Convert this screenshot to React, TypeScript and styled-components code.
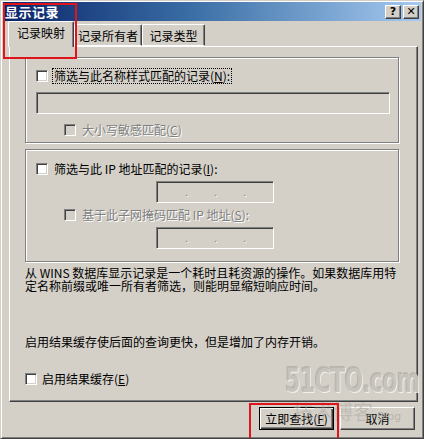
import React from "react";
import styled, { createGlobalStyle, css } from "styled-components";

const Global = createGlobalStyle`
  html, body { margin: 0; padding: 0; background: #d4d0c8; }
  body { font-family: "Noto Sans CJK SC", "DejaVu Sans", sans-serif; font-size: 12px; color: #000; }
  * { box-sizing: border-box; }
`;

const Window = styled.div`
  position: relative;
  width: 424px;
  height: 439px;
  background: #d4d0c8;
  border-top: 1px solid #d4d0c8;
  border-left: 1px solid #d4d0c8;
  border-right: 1px solid #404040;
  border-bottom: 1px solid #404040;
  box-shadow: inset 1px 1px #fff, inset -1px -1px #808080;
  padding: 1px 2px 0 2px;
  overflow: hidden;
`;

const TitleBar = styled.div`
  height: 19px;
  display: flex;
  align-items: center;
  justify-content: space-between;
  padding: 0 2px 0 2px;
  background: linear-gradient(to right, #0a246a 0%, #3a6ea5 45%, #a6caf0 100%);
`;

const Title = styled.div`
  color: #fff;
  font-weight: bold;
  font-size: 13px;
  line-height: 18px;
  letter-spacing: 0.5px;
`;

const TitleButtons = styled.div`
  display: flex;
  gap: 2px;
`;

const CapButton = styled.div`
  width: 16px;
  height: 14px;
  background: #d4d0c8;
  border-top: 1px solid #fff;
  border-left: 1px solid #fff;
  border-right: 1px solid #404040;
  border-bottom: 1px solid #404040;
  box-shadow: inset -1px -1px #808080;
  display: flex;
  align-items: center;
  justify-content: center;
  font-family: "DejaVu Sans", sans-serif;
  font-weight: bold;
  font-size: 11px;
  line-height: 1;
`;

const Body = styled.div`
  padding: 0 5px 0 5px;
`;

const TabStrip = styled.div`
  display: flex;
  align-items: flex-end;
  height: 26px;
  padding-left: 0;
  position: relative;
  z-index: 2;
  margin-bottom: -1px;
`;

const Tab = styled.div<{ $active?: boolean; $w: number }>`
  width: ${(p) => p.$w}px;
  height: ${(p) => (p.$active ? 26 : 22)}px;
  background: #d4d0c8;
  border-top: 1px solid #fff;
  border-left: 1px solid #fff;
  border-right: 1px solid #404040;
  box-shadow: inset -1px 0 #808080;
  border-radius: 2px 2px 0 0;
  display: flex;
  align-items: center;
  justify-content: center;
  font-size: 12px;
  line-height: 14px;
  ${(p) =>
    p.$active
      ? css`
          padding-bottom: 3px;
        `
      : css`
          margin-bottom: 1px;
          border-bottom: 1px solid #fff;
          padding-top: 1px;
        `}
`;

const Panel = styled.div`
  height: 356px;
  width: 409px;
  margin-left: 1px;
  border-top: 1px solid #fff;
  border-left: 1px solid #fff;
  border-right: 1px solid #404040;
  border-bottom: 1px solid #404040;
  box-shadow: inset -1px -1px #808080;
  padding: 10px 0 0 15px;
  display: flex;
  flex-direction: column;
`;

const Group = styled.div<{ $h: number; $top?: number }>`
  width: 374px;
  height: ${(p) => p.$h}px;
  margin-top: ${(p) => p.$top || 0}px;
  border: 1px solid #808080;
  box-shadow: inset 1px 1px #fff, 1px 1px #fff;
  padding: 0 0 0 10px;
  display: flex;
  flex-direction: column;
  align-items: flex-start;
`;

const Row = styled.div<{ $indent?: number; $top?: number; $gap?: number }>`
  display: flex;
  align-items: center;
  gap: ${(p) => p.$gap ?? 5}px;
  height: 14px;
  margin-left: ${(p) => p.$indent || 0}px;
  margin-top: ${(p) => p.$top || 0}px;
`;

const Check = styled.span<{ $disabled?: boolean }>`
  width: 12px;
  height: 12px;
  flex: none;
  background: ${(p) => (p.$disabled ? "#d4d0c8" : "#fff")};
  border-top: 1px solid #808080;
  border-left: 1px solid #808080;
  border-right: 1px solid #fff;
  border-bottom: 1px solid #fff;
  box-shadow: inset 1px 1px #404040, inset -1px -1px #d4d0c8;
`;

const Label = styled.span<{ $disabled?: boolean; $focus?: boolean }>`
  white-space: pre;
  line-height: 14px;
  font-size: 12px;
  color: ${(p) => (p.$disabled ? "#808080" : "#000")};
  text-shadow: ${(p) => (p.$disabled ? "1px 1px #fff" : "none")};
  outline: ${(p) => (p.$focus ? "1px dotted #000" : "none")};
  outline-offset: 0px;
  padding: 0 1px;
`;

const U = styled.span`
  text-decoration: underline;
`;

const Field = styled.div<{ $w: number; $top?: number; $left?: number }>`
  width: ${(p) => p.$w}px;
  height: 22px;
  flex: none;
  margin-top: ${(p) => p.$top || 0}px;
  margin-left: ${(p) => p.$left || 0}px;
  background: #d4d0c8;
  border-top: 1px solid #808080;
  border-left: 1px solid #808080;
  border-right: 1px solid #fff;
  border-bottom: 1px solid #fff;
  box-shadow: inset 1px 1px #404040, inset -1px -1px #d4d0c8;
`;

const IpField = styled(Field)`
  display: grid;
  grid-template-columns: repeat(3, 29px) 1fr;
  align-items: center;
  padding-left: 2px;
`;

const IpSeg = styled.span`
  text-align: right;
  color: #808080;
  text-shadow: 1px 1px #fff;
  font-size: 10px;
  line-height: 10px;
`;

const Para = styled.p<{ $top: number }>`
  margin: ${(p) => p.$top}px 0 0 0;
  font-size: 12px;
  line-height: 13px;
  width: 380px;
  white-space: pre;
`;

const Footer = styled.div`
  display: flex;
  justify-content: flex-end;
  gap: 6px;
  padding: 5px 1px 0 0;
`;

const Button = styled.div<{ $default?: boolean }>`
  width: 75px;
  height: 23px;
  display: flex;
  align-items: center;
  justify-content: center;
  background: #d4d0c8;
  font-size: 12px;
  ${(p) =>
    p.$default
      ? css`
          border: 1px solid #000;
          box-shadow: inset 1px 1px #fff, inset -1px -1px #404040,
            inset -2px -2px #808080;
        `
      : css`
          border-top: 1px solid #fff;
          border-left: 1px solid #fff;
          border-right: 1px solid #404040;
          border-bottom: 1px solid #404040;
          box-shadow: inset -1px -1px #808080;
        `}
`;

const Highlight = styled.div<{ $x: number; $y: number; $w: number; $h: number }>`
  position: absolute;
  left: ${(p) => p.$x}px;
  top: ${(p) => p.$y}px;
  width: ${(p) => p.$w}px;
  height: ${(p) => p.$h}px;
  border: 2px solid #e0141b;
  pointer-events: none;
  z-index: 5;
`;

const Watermark = styled.div`
  position: absolute;
  left: 284px;
  top: 362px;
  z-index: 4;
  pointer-events: none;
  display: flex;
  flex-direction: column;
  align-items: flex-start;
`;

const WmBig = styled.span`
  font-family: "DejaVu Sans Condensed", "DejaVu Sans", sans-serif;
  font-weight: bold;
  font-size: 33px;
  line-height: 36px;
  letter-spacing: -1px;
  color: rgba(190, 186, 178, 0.8);
  text-shadow: 1px 1px rgba(255, 255, 255, 0.7), -1px -1px rgba(150, 146, 140, 0.45);
  transform: scaleX(0.75);
  transform-origin: left;
`;

const WmSmall = styled.span`
  display: flex;
  align-items: baseline;
  gap: 4px;
  margin-left: 8px;
  margin-top: 2px;
  font-size: 20px;
  line-height: 22px;
  color: rgba(170, 166, 160, 0.5);
`;

const WmBlog = styled.span`
  font-family: "DejaVu Sans", sans-serif;
  font-size: 11px;
  color: rgba(170, 166, 160, 0.7);
`;

export default function App() {
  return (
    <>
      <Global />
      <Window>
        <TitleBar>
          <Title>显示记录</Title>
          <TitleButtons>
            <CapButton>?</CapButton>
            <CapButton>✕</CapButton>
          </TitleButtons>
        </TitleBar>
        <Body>
          <TabStrip>
            <Tab $active $w={66}>记录映射</Tab>
            <Tab $w={68}>记录所有者</Tab>
            <Tab $w={63}>记录类型</Tab>
          </TabStrip>
          <Panel>
            <Group $h={86}>
              <Row $top={11}>
                <Check />
                <Label $focus>
                  筛选与此名称样式匹配的记录(<U>N</U>):
                </Label>
              </Row>
              <Field $w={354} $top={9} />
              <Row $indent={28} $top={9}>
                <Check $disabled />
                <Label $disabled>
                  大小写敏感匹配(<U>C</U>)
                </Label>
              </Row>
            </Group>
            <Group $h={113} $top={6}>
              <Row $top={12}>
                <Check />
                <Label>
                  筛选与此 IP 地址匹配的记录(<U>I</U>):
                </Label>
              </Row>
              <IpField $w={118} $top={5} $left={120}>
                <IpSeg>.</IpSeg>
                <IpSeg>.</IpSeg>
                <IpSeg>.</IpSeg>
              </IpField>
              <Row $indent={28} $top={5}>
                <Check $disabled />
                <Label $disabled>
                  基于此子网掩码匹配 IP 地址(<U>S</U>):
                </Label>
              </Row>
              <IpField $w={118} $top={5} $left={120}>
                <IpSeg>.</IpSeg>
                <IpSeg>.</IpSeg>
                <IpSeg>.</IpSeg>
              </IpField>
            </Group>
            <Para $top={4}>
              {"从 WINS 数据库显示记录是一个耗时且耗资源的操作。如果数据库用特\n定名称前缀或唯一所有者筛选，则能明显缩短响应时间。"}
            </Para>
            <Para $top={43}>启用结果缓存使后面的查询更快，但是增加了内存开销。</Para>
            <Row $top={24} $gap={4}>
              <Check />
              <Label>
                启用结果缓存(<U>E</U>)
              </Label>
            </Row>
          </Panel>
          <Footer>
            <Button $default>
              立即查找(<U>F</U>)
            </Button>
            <Button>取消</Button>
          </Footer>
        </Body>
        <Watermark aria-hidden="true">
          <WmBig>51CTO.com</WmBig>
          <WmSmall>
            技术博客<WmBlog>Blog</WmBlog>
          </WmSmall>
        </Watermark>
        <Highlight $x={2} $y={2} $w={74} $h={56} />
        <Highlight $x={248} $y={402} $w={90} $h={40} />
      </Window>
    </>
  );
}
